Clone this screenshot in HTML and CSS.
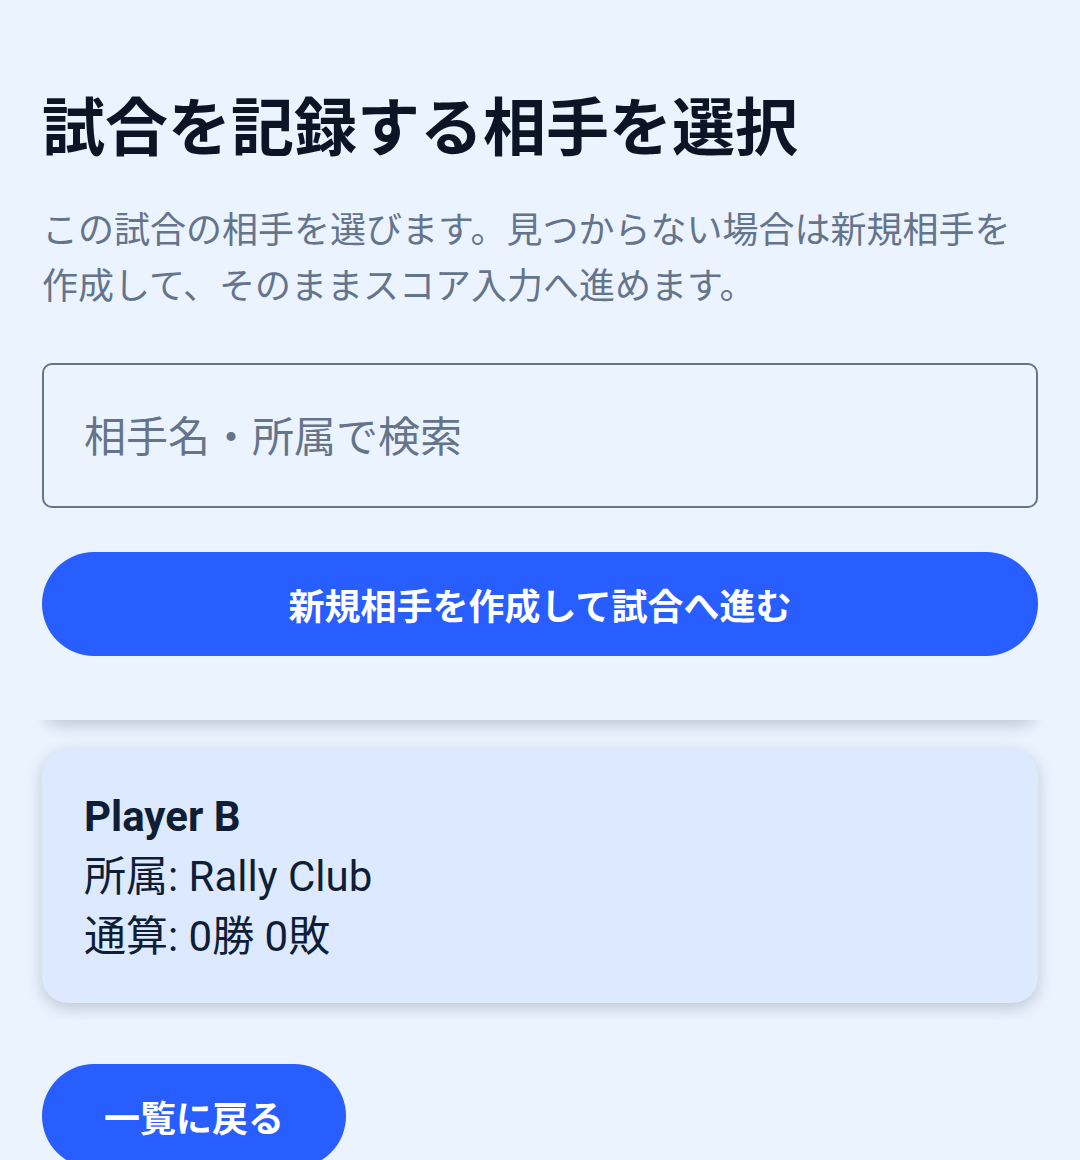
FILE: index.html
```html
<!DOCTYPE html>
<html lang="ja">
<head>
<meta charset="utf-8">
<title>試合を記録する相手を選択</title>
<link rel="stylesheet" href="styles.css">
</head>
<body>
<main class="page">
  <h1 class="title">試合を記録する相手を選択</h1>
  <p class="lead">この試合の相手を選びます。見つからない場合は新規相手を作成して、そのままスコア入力へ進めます。</p>
  <input class="search" type="text" placeholder="相手名・所属で検索">
  <button class="btn btn-wide" type="button">新規相手を作成して試合へ進む</button>
  <section class="list">
    <div class="ghost"></div>
    <article class="card">
      <div class="card-name">Player B</div>
      <div class="card-line">所属: Rally Club</div>
      <div class="card-line">通算: 0勝 0敗</div>
    </article>
  </section>
  <button class="btn btn-back" type="button">一覧に戻る</button>
</main>
</body>
</html>
```

FILE: styles.css
```css
html, body {
  margin: 0;
  padding: 0;
  background: #ebf3ff;
  overflow: hidden;
}

body {
  font-family: Roboto, "Noto Sans CJK JP", sans-serif;
  color: #0f1b2e;
}

.page {
  display: flex;
  flex-direction: column;
  align-items: flex-start;
  padding: 92px 42px 0;
}

.title {
  margin: 0;
  font-size: 63px;
  line-height: 74px;
  font-weight: 700;
  color: #0b1526;
  letter-spacing: 0;
}

.lead {
  margin: 37px 0 0;
  font-size: 36px;
  line-height: 56px;
  color: #64748b;
}

.search {
  margin-top: 48px;
  width: 100%;
  box-sizing: border-box;
  height: 145px;
  border: 2px solid #64748b;
  border-radius: 10px;
  background: transparent;
  padding: 4px 40px 0;
  font-family: Roboto, "Noto Sans CJK JP", sans-serif;
  font-size: 42px;
  color: #0f1b2e;
  outline: none;
}

.search::placeholder {
  color: #64748b;
}

.btn {
  border: none;
  background: #285dff;
  color: #ffffff;
  font-family: Roboto, "Noto Sans CJK JP", sans-serif;
  font-size: 36px;
  font-weight: 700;
  height: 104px;
  border-radius: 52px;
  padding: 0 62px;
}

.btn-wide {
  margin-top: 44px;
  width: 100%;
}

.list {
  align-self: stretch;
  margin: 64px -42px 0;
  padding: 0 42px;
  height: 300px;
  overflow: hidden;
  display: flex;
  flex-direction: column;
}

.ghost {
  flex: none;
  height: 40px;
  margin-top: -40px;
  border-radius: 24px;
  background: #dde9fe;
  box-shadow: 0 5px 16px rgba(30, 41, 59, 0.22);
}

.card {
  flex: none;
  margin-top: 29px;
  background: #dde9fe;
  border-radius: 26px;
  padding: 38px 42px 36px;
  box-shadow: 0 5px 16px rgba(30, 41, 59, 0.22);
}

.card-name {
  font-size: 42px;
  line-height: 60px;
  font-weight: 700;
  color: #0f1d35;
}

.card-line {
  font-size: 42px;
  line-height: 60px;
  color: #0f1d35;
}

.btn-back {
  margin-top: 44px;
}
```
